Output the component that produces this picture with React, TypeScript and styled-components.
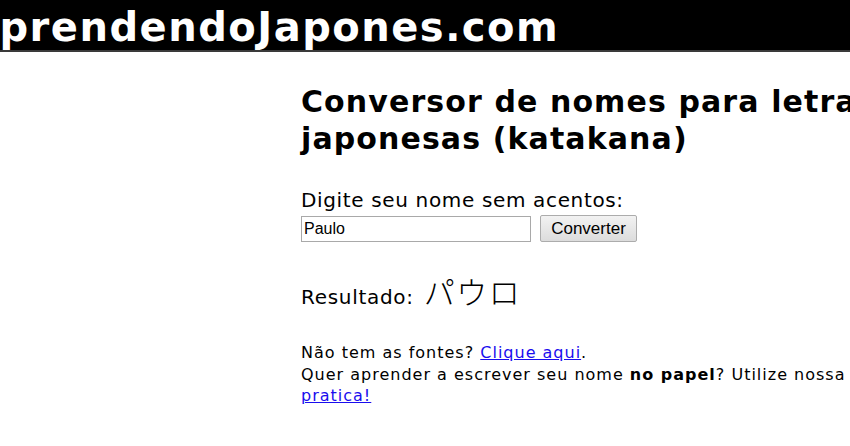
import styled, { createGlobalStyle } from 'styled-components'

const GlobalStyle = createGlobalStyle`
  html, body {
    margin: 0;
    padding: 0;
    background: #ffffff;
  }
  body {
    font-family: Verdana, "DejaVu Sans", sans-serif;
    color: #000000;
    overflow: hidden;
  }
`

const Page = styled.div`
  width: 850px;
  height: 446px;
  overflow: hidden;
`

const Header = styled.header`
  height: 50px;
  background: #000000;
  border-bottom: 2px solid #3a3a3a;
  overflow: hidden;
  white-space: nowrap;
`

const Logo = styled.h1`
  margin: 0 0 0 -33px;
  font-family: Verdana, "DejaVu Sans", sans-serif;
  font-weight: bold;
  font-size: 40px;
  line-height: 54px;
  color: #ffffff;
  letter-spacing: 1.5px;
`

const Content = styled.main`
  padding-left: 301px;
  padding-top: 31px;
  white-space: nowrap;
`

const Title = styled.h2`
  margin: 0;
  font-size: 30px;
  line-height: 37px;
  font-weight: bold;
  letter-spacing: 1.1px;
`

const Form = styled.form`
  margin-top: 31px;
  display: flex;
  flex-direction: column;
`

const Label = styled.label`
  font-size: 20px;
  line-height: 24px;
  letter-spacing: 0.65px;
`

const Row = styled.div`
  display: flex;
  align-items: center;
  gap: 9px;
  margin-top: 3px;
`

const NameInput = styled.input`
  box-sizing: border-box;
  width: 230px;
  height: 26px;
  margin: 0;
  padding: 1px 2px;
  border: 1px solid #a9a9a9;
  font-family: "Liberation Sans", Arial, sans-serif;
  font-size: 16px;
  color: #000000;
  outline: none;
`

const Button = styled.button`
  box-sizing: border-box;
  width: 97px;
  height: 27px;
  margin: 0;
  border: 1px solid #acacac;
  border-radius: 2px;
  background: linear-gradient(#f2f2f2, #dcdcdc);
  font-family: "Liberation Sans", Arial, sans-serif;
  font-size: 17px;
  color: #000000;
  padding: 0;
`

const Result = styled.p`
  margin: 33px 0 0;
  font-size: 20px;
  line-height: 32px;
  letter-spacing: 0.7px;
  display: flex;
  align-items: baseline;
  gap: 10px;
`

const Kana = styled.span`
  font-family: "Noto Sans CJK JP", sans-serif;
  font-size: 31px;
  font-weight: 300;
  letter-spacing: 1.5px;
`

const Note = styled.p`
  margin: 29px 0 0;
  font-size: 16px;
  line-height: 21.5px;
  letter-spacing: 1px;
`

const Link = styled.a`
  color: #1a0dee;
  text-decoration: underline;
`

export default function App() {
  return (
    <Page>
      <GlobalStyle />
      <Header>
        <Logo>AprendendoJapones.com</Logo>
      </Header>
      <Content>
        <Title>
          Conversor de nomes para letras
          <br />
          japonesas (katakana)
        </Title>
        <Form onSubmit={(e) => e.preventDefault()}>
          <Label htmlFor="nome">Digite seu nome sem acentos:</Label>
          <Row>
            <NameInput id="nome" defaultValue="Paulo" />
            <Button type="submit">Converter</Button>
          </Row>
        </Form>
        <Result>
          <span>Resultado:</span>
          <Kana>パウロ</Kana>
        </Result>
        <Note>
          Não tem as fontes? <Link href="#">Clique aqui</Link>.
          <br />
          Quer aprender a escrever seu nome <b>no papel</b>? Utilize nossa folha de
          <br />
          <Link href="#">pratica!</Link>
        </Note>
      </Content>
    </Page>
  )
}
